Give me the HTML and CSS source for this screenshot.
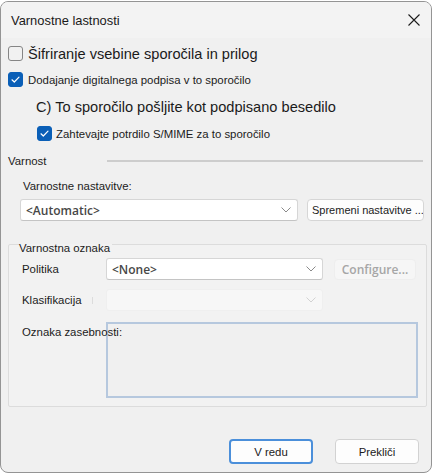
FILE: index.html
```html
<!DOCTYPE html>
<html lang="sl">
<head>
<meta charset="utf-8">
<title>Varnostne lastnosti</title>
<link rel="stylesheet" href="styles.css">
</head>
<body>
<div class="window">
  <div class="titlebar">
    <span class="title">Varnostne lastnosti</span>
    <svg class="close" width="12" height="12" viewBox="0 0 12 12"><path d="M0.5 0.5 L11.5 11.5 M11.5 0.5 L0.5 11.5" stroke="#1c1c1c" stroke-width="1.1" fill="none"/></svg>
  </div>
  <div class="content">
    <label class="row big r1"><span class="cb"></span><span>Šifriranje vsebine sporočila in prilog</span></label>
    <label class="row r2"><span class="cb checked"><svg width="15" height="15" viewBox="0 0 15 15"><path d="M4 7.8 L6.3 10 L11 5.2" stroke="#fff" stroke-width="1.2" fill="none" stroke-linecap="round" stroke-linejoin="round"/></svg></span><span>Dodajanje digitalnega podpisa v to sporočilo</span></label>
    <div class="row big r3">C) To sporočilo pošljite kot podpisano besedilo</div>
    <label class="row r4"><span class="cb checked"><svg width="15" height="15" viewBox="0 0 15 15"><path d="M4 7.8 L6.3 10 L11 5.2" stroke="#fff" stroke-width="1.2" fill="none" stroke-linecap="round" stroke-linejoin="round"/></svg></span><span>Zahtevajte potrdilo S/MIME za to sporočilo</span></label>
    <div class="section"><span class="section-label">Varnost</span><span class="rule"></span></div>
    <div class="sublabel">Varnostne nastavitve:</div>
    <div class="settings-row">
      <div class="select wide"><span class="sel-text">&lt;Automatic&gt;</span><svg class="chev" width="10" height="6" viewBox="0 0 10 6"><path d="M0.5 0.5 L5 5 L9.5 0.5" stroke="#8a8a8a" stroke-width="1" fill="none"/></svg></div>
      <button class="btn-change">Spremeni nastavitve ...</button>
    </div>
    <fieldset class="group">
      <legend>Varnostna oznaka</legend>
      <div class="grow">
        <span class="glabel">Politika</span>
        <div class="select mid"><span class="sel-text">&lt;None&gt;</span><svg class="chev" width="10" height="6" viewBox="0 0 10 6"><path d="M0.5 0.5 L5 5 L9.5 0.5" stroke="#8a8a8a" stroke-width="1" fill="none"/></svg></div>
        <button class="btn-config" disabled>Configure...</button>
      </div>
      <div class="grow g2">
        <span class="glabel">Klasifikacija<span class="tick"></span></span>
        <div class="select mid disabled"><span></span><svg class="chev" width="10" height="6" viewBox="0 0 10 6"><path d="M0.5 0.5 L5 5 L9.5 0.5" stroke="#d2d2d2" stroke-width="1" fill="none"/></svg></div>
      </div>
      <div class="grow g3">
        <span class="glabel over">Oznaka zasebnosti:</span>
        <div class="textarea"></div>
      </div>
    </fieldset>
  </div>
  <div class="footer">
    <button class="btn primary">V redu</button>
    <button class="btn">Prekliči</button>
  </div>
</div>
</body>
</html>
```

FILE: styles.css
```css
body {
  margin: 0;
  background: #ffffff;
  font-family: "Liberation Sans", Arial, sans-serif;
  font-size: 11.4px;
  color: #1b1b1b;
}

.window {
  box-sizing: border-box;
  width: 432px;
  height: 472px;
  margin-top: 1px;
  border: 1px solid #949494;
  border-radius: 8px;
  background: #f0f0f0;
  overflow: hidden;
  display: flex;
  flex-direction: column;
}

.titlebar {
  flex: none;
  height: 36px;
  display: flex;
  align-items: center;
  justify-content: space-between;
  padding: 0 11px 0 10px;
  background: #f3f3f3;
}

.title {
  font-size: 12.9px;
  color: #1a1a1a;
}

.close {
  display: block;
}

.content {
  padding: 0 4px 0 7px;
}

.row {
  display: flex;
  align-items: center;
  gap: 5px;
  white-space: nowrap;
}

.big {
  font-size: 14.6px;
}

.r1 { height: 31px; }
.r2 { height: 21px; }
.r3 { height: 34px; padding-left: 28px; }
.r4 { height: 19px; padding-left: 29px; gap: 4px; }

.cb {
  box-sizing: border-box;
  flex: none;
  width: 15px;
  height: 15px;
  border: 1px solid #858585;
  border-radius: 3px;
  background: #f1f1f1;
}

.cb svg {
  display: block;
  margin: -1px;
}

.cb.checked {
  background: #0a5fb7;
  border-color: #0a5fb7;
}

.section {
  height: 36px;
  display: flex;
  align-items: center;
  margin-right: 4px;
}

.section-label {
  width: 99px;
  flex: none;
}

.rule {
  flex: 1;
  height: 2px;
  background: #cdcdcd;
}

.sublabel {
  height: 14px;
  line-height: 14px;
  padding-left: 15px;
}

.settings-row {
  display: flex;
  height: 22px;
  margin-top: 6px;
  padding-left: 12px;
  gap: 9px;
}

.select {
  box-sizing: border-box;
  height: 22px;
  display: flex;
  align-items: center;
  justify-content: space-between;
  padding: 0 6px 0 5px;
  background: #ffffff;
  border: 1px solid #d6d6d6;
  border-bottom-color: #c4c4c4;
  border-radius: 3px;
}

.select.wide { width: 278px; }
.select.mid { width: 217px; }

.select.disabled {
  background: #f7f7f7;
  border-color: #efefef;
}

.sel-text {
  font-family: "Open Sans", "Liberation Sans", sans-serif;
  font-weight: 600;
  font-size: 12px;
  color: #474747;
}

.chev {
  display: block;
}

.btn-change {
  box-sizing: border-box;
  width: 117px;
  height: 22px;
  padding: 0 0 0 4px;
  text-align: left;
  white-space: nowrap;
  overflow: hidden;
  font: inherit;
  font-size: 11px;
  color: #1b1b1b;
  background: #fdfdfd;
  border: 1px solid #d6d6d6;
  border-radius: 4px;
}

.group {
  margin: 11px 0 0 0;
  padding: 2px 0 8px 10px;
  border: 1px solid #dcdcdc;
  border-radius: 2px;
  background: #f2f2f2;
  min-width: 0;
}

.group legend {
  padding: 8px 2px 0 0;
  line-height: 16px;
}

.grow {
  display: flex;
  align-items: center;
  height: 22px;
  padding-left: 3px;
}

.g2 { margin-top: 9px; }

.g3 {
  margin-top: 11px;
  height: 76px;
  align-items: flex-start;
}

.glabel {
  width: 84px;
  flex: none;
  white-space: nowrap;
  display: flex;
  align-items: center;
}

.tick {
  width: 1px;
  height: 7px;
  margin-left: 10px;
  background: #dcdcdc;
}

.glabel.over {
  position: relative;
  z-index: 1;
  line-height: 20px;
}

.btn-config {
  box-sizing: border-box;
  width: 82px;
  height: 21px;
  margin-left: 11px;
  padding: 0;
  font-family: "Open Sans", "Liberation Sans", sans-serif;
  font-weight: 600;
  font-size: 12px;
  color: #a6a6a6;
  background: #f6f6f6;
  border: 1px solid #eeeeee;
  border-radius: 4px;
}

.textarea {
  box-sizing: border-box;
  width: 312px;
  height: 76px;
  border: 2px solid #b6c8de;
  background: #f0f0f0;
}

.footer {
  display: flex;
  justify-content: flex-end;
  gap: 22px;
  margin-top: 32px;
  padding-right: 12px;
}

.btn {
  box-sizing: border-box;
  width: 84px;
  height: 25px;
  padding: 0;
  font: inherit;
  color: #1b1b1b;
  background: #fdfdfd;
  border: 1px solid #d2d2d2;
  border-radius: 4px;
}

.btn.primary {
  border: 2px solid #4b8fda;
}
```
